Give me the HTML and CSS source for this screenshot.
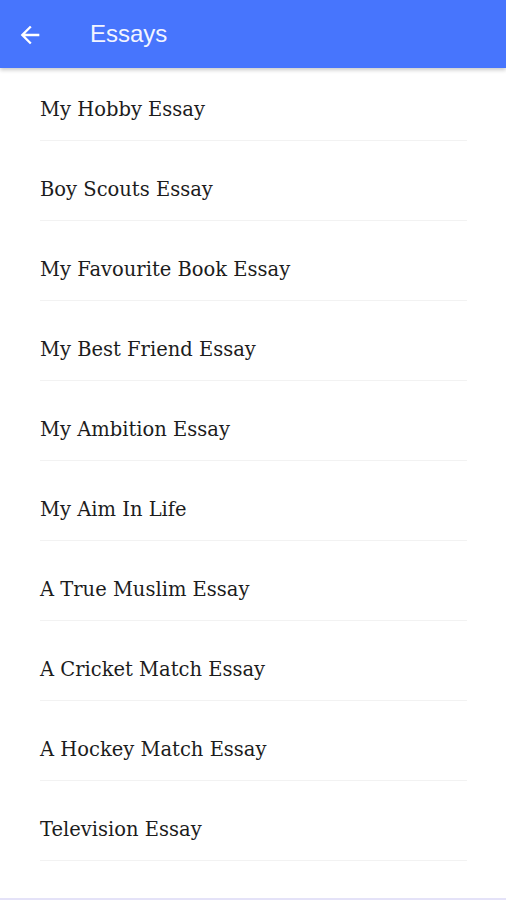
FILE: index.html
```html
<!DOCTYPE html>
<html lang="en">
<head>
    <meta charset="UTF-8">
    <meta name="viewport" content="width=device-width, initial-scale=1.0">
    <title>Essays</title>
    <link rel="stylesheet" href="styles.css">
</head>
<body>
    <div class="app">
        <header class="toolbar">
            <button class="back-btn" aria-label="Back">
                <svg width="28" height="28" viewBox="0 0 24 24">
                    <path d="M20 11H7.83l5.59-5.59L12 4l-8 8 8 8 1.41-1.41L7.83 13H20v-2z" fill="#fff"/>
                </svg>
            </button>
            <h1 class="toolbar-title">Essays</h1>
        </header>

        <ul class="essay-list">
            <li class="essay-item">My Hobby Essay</li>
            <li class="essay-item">Boy Scouts Essay</li>
            <li class="essay-item">My Favourite Book Essay</li>
            <li class="essay-item">My Best Friend Essay</li>
            <li class="essay-item">My Ambition Essay</li>
            <li class="essay-item">My Aim In Life</li>
            <li class="essay-item">A True Muslim Essay</li>
            <li class="essay-item">A Cricket Match Essay</li>
            <li class="essay-item">A Hockey Match Essay</li>
            <li class="essay-item">Television Essay</li>
        </ul>
    </div>
</body>
</html>
```

FILE: styles.css
```css
html, body {
    margin: 0;
    padding: 0;
}
body {
    font-family: "DejaVu Serif", serif;
    background: #fff;
    color: #1c1c1c;
}
.app {
    height: 900px;
    overflow: hidden;
    border-bottom: 2px solid #e4e2f8;
    box-sizing: border-box;
}
.toolbar {
    position: relative;
    z-index: 1;
    height: 68px;
    background: #4775fd;
    display: flex;
    align-items: center;
    box-shadow: 0 2px 4px rgba(0, 0, 0, 0.22);
}
.back-btn {
    background: none;
    border: none;
    padding: 0;
    margin: 2px 0 0 16px;
    width: 28px;
    height: 28px;
    display: flex;
}
.toolbar-title {
    margin: 0 0 0 46px;
    font-family: "Liberation Sans", Arial, sans-serif;
    font-weight: normal;
    font-size: 24px;
    color: #f2f4ff;
}
.essay-list {
    list-style: none;
    margin: 0;
    padding: 0 39px 0 40px;
}
.essay-item {
    font-size: 19.5px;
    line-height: 20px;
    padding: 39px 0 20px;
    border-bottom: 1px solid #f2f2f2;
}
.essay-item:first-child {
    padding-top: 32px;
}
```
